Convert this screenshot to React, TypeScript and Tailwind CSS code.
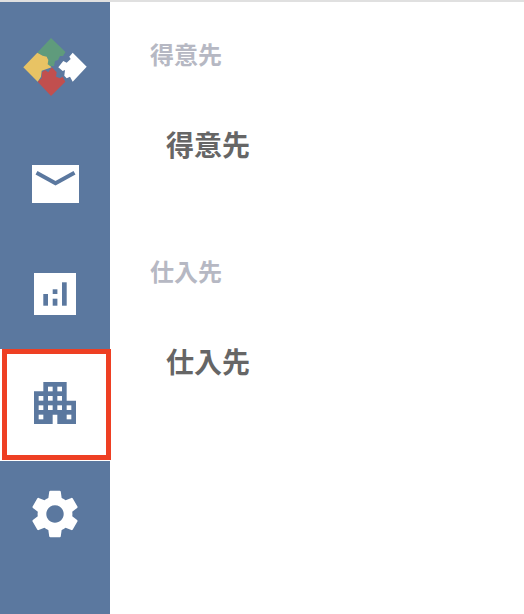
import { MdSettings } from "react-icons/md";

const Logo = () => (
  <svg width="70" height="64" viewBox="20 35 70 64">
    <path d="M51 38 L65.5 52 L63 56 L60 56 L58 60 L55 61 L54 66 L48 66 L48 58 L43 56 L37.5 52.5 Z" fill="#5f9b7c" />
    <path d="M23.3 67.3 L37.3 52.7 L42.7 55.7 L46.7 56.7 L48.3 60 L47.7 64.3 L51.7 67.3 L41.7 70.7 L41 76.7 L37.7 81.7 Z" fill="#e8c364" />
    <path d="M51 96 L37.7 81.7 L41.7 78.3 L42 72.3 L45 70 L48.3 72.3 L51.7 67.3 L56.7 72.3 L56 76.7 L60 78.3 L62.7 76.7 L65.3 81.7 Z" fill="#c14f4e" />
    <path d="M86.7 66.7 L72.7 52.7 L69.3 56.7 L70.7 59 L66.7 62.7 L63.3 61 L58.3 67.3 L62.7 71 L65 70 L64.3 75.7 L66.7 78.3 L70 76.7 L72.7 81.7 Z" fill="#ffffff" />
  </svg>
);

const MailIcon = () => (
  <svg width="47" height="38" viewBox="0 0 47 38">
    <rect width="47" height="38" fill="#ffffff" />
    <path d="M4.5 7.7 L23.5 18.3 L42.5 7.7" fill="none" stroke="#5b789f" strokeWidth="4" />
  </svg>
);

const ChartIcon = () => (
  <svg width="42" height="42" viewBox="0 0 42 42">
    <rect width="42" height="42" fill="#ffffff" />
    <g fill="#5b789f">
      <rect x="9.3" y="21" width="4.7" height="11.7" />
      <rect x="18.7" y="16.3" width="4.7" height="4.7" />
      <rect x="18.7" y="25.7" width="4.7" height="7" />
      <rect x="28" y="9.3" width="4.7" height="23.4" />
    </g>
  </svg>
);

const BuildingIcon = () => (
  <svg width="42" height="42" viewBox="0 0 18 18">
    <path d="M4 0 H14 V8 H18 V18 H10 V14 H8 V18 H0 V4 H4 Z" fill="#5b789f" />
    <g fill="#ffffff">
      <rect x="6" y="2" width="2" height="2" />
      <rect x="10" y="2" width="2" height="2" />
      <rect x="2" y="6" width="2" height="2" />
      <rect x="6" y="6" width="2" height="2" />
      <rect x="10" y="6" width="2" height="2" />
      <rect x="2" y="10" width="2" height="2" />
      <rect x="6" y="10" width="2" height="2" />
      <rect x="10" y="10" width="2" height="2" />
      <rect x="14" y="10" width="2" height="2" />
      <rect x="2" y="14" width="2" height="2" />
      <rect x="14" y="14" width="2" height="2" />
    </g>
  </svg>
);

const sections = ["得意先", "仕入先"];

export default function App() {
  return (
    <div className="flex h-[614px] w-[524px] flex-col overflow-hidden bg-white font-['Liberation_Sans','Noto_Sans_CJK_JP',sans-serif]">
      <div className="h-[2px] bg-[#e0e0e0]" />
      <div className="flex flex-1">
        {/* Sidebar */}
        <div className="flex w-[111px] flex-col">
          <div className="flex h-[127px] w-[110px] items-start justify-center bg-[#5b789f] pt-[33px]">
            <Logo />
          </div>
          <div className="flex h-[110px] w-[110px] items-start justify-center bg-[#5b789f] pt-[36px]">
            <MailIcon />
          </div>
          <div className="flex h-[110px] w-[110px] items-start justify-center bg-[#5b789f] pt-[34px]">
            <ChartIcon />
          </div>
          <div className="ml-[2px] flex h-[111px] w-[109px] items-start justify-center border-[5px] border-[#ee3f23] bg-white pt-[28px] pr-[3px]">
            <BuildingIcon />
          </div>
          <div className="mt-px flex w-[110px] flex-1 items-start justify-center bg-[#5b789f] pt-[24px] pr-px">
            <MdSettings size={58} color="#ffffff" />
          </div>
        </div>
        {/* Main */}
        <div className="flex-1 pl-[39px] pt-[37px]">
          {sections.map((name) => (
            <div key={name} className="h-[217px]">
              <div className="text-[24px] leading-[34px] font-bold text-[#b6b8c3]">{name}</div>
              <div className="mt-[54px] pl-[16px] text-[28px] leading-[40px] font-bold text-[#666666]">{name}</div>
            </div>
          ))}
        </div>
      </div>
    </div>
  );
}
